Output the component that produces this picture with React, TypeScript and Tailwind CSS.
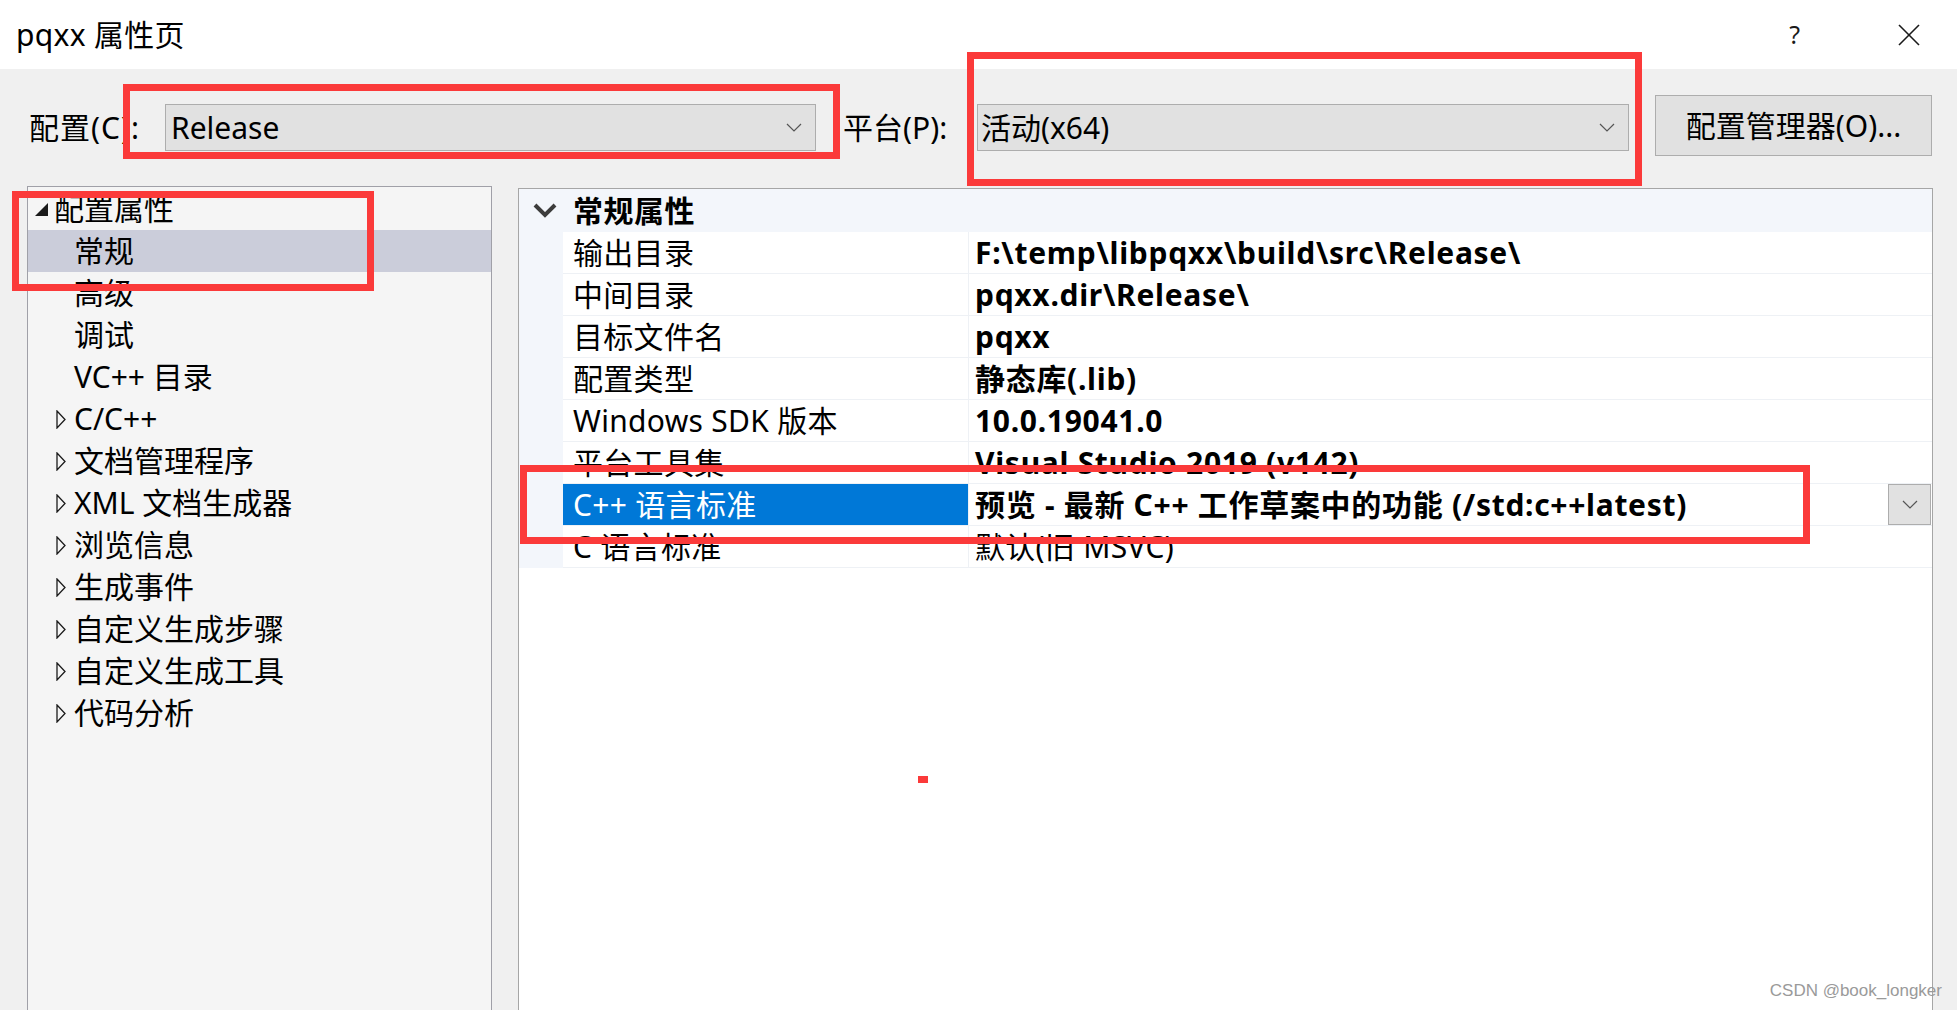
import React from "react";

const FONT = "font-['Noto_Sans','Noto_Sans_CJK_SC',sans-serif]";

function ComboChevron() {
  return (
    <svg width="16" height="9" viewBox="0 0 16 9" className="shrink-0">
      <polyline points="1,1 8,8 15,1" fill="none" stroke="#555555" strokeWidth="1.2" />
    </svg>
  );
}

function OpenTriangle() {
  return (
    <svg width="13" height="13" viewBox="0 0 13 13" className="shrink-0">
      <polygon points="13,0 13,13 0,13" fill="#1a1a1a" />
    </svg>
  );
}

function ClosedArrow() {
  return (
    <svg width="10" height="19" viewBox="0 0 10 19" className="shrink-0">
      <polygon points="1,1 9,9.5 1,18" fill="none" stroke="#1a1a1a" strokeWidth="1.3" strokeLinejoin="miter" />
    </svg>
  );
}

type TreeItem = { t: string; kind: "open" | "child" | "closed"; sel?: boolean };

const tree: TreeItem[] = [
  { t: "配置属性", kind: "open" },
  { t: "常规", kind: "child", sel: true },
  { t: "高级", kind: "child" },
  { t: "调试", kind: "child" },
  { t: "VC++ 目录", kind: "child" },
  { t: "C/C++", kind: "closed" },
  { t: "文档管理程序", kind: "closed" },
  { t: "XML 文档生成器", kind: "closed" },
  { t: "浏览信息", kind: "closed" },
  { t: "生成事件", kind: "closed" },
  { t: "自定义生成步骤", kind: "closed" },
  { t: "自定义生成工具", kind: "closed" },
  { t: "代码分析", kind: "closed" },
];

type Prop = { name: string; value: string; bold: boolean; sel?: boolean };

const props: Prop[] = [
  { name: "输出目录", value: "F:\\temp\\libpqxx\\build\\src\\Release\\", bold: true },
  { name: "中间目录", value: "pqxx.dir\\Release\\", bold: true },
  { name: "目标文件名", value: "pqxx", bold: true },
  { name: "配置类型", value: "静态库(.lib)", bold: true },
  { name: "Windows SDK 版本", value: "10.0.19041.0", bold: true },
  { name: "平台工具集", value: "Visual Studio 2019 (v142)", bold: true },
  { name: "C++ 语言标准", value: "预览 - 最新 C++ 工作草案中的功能 (/std:c++latest)", bold: true, sel: true },
  { name: "C 语言标准", value: "默认(旧 MSVC)", bold: false },
];

export default function App() {
  return (
    <div className={`relative w-[1957px] h-[1010px] overflow-hidden bg-[#f0f0f0] text-black ${FONT}`}>
      {/* Title bar */}
      <div className="flex h-[69px] items-center bg-white">
        <span className="ml-[16px] text-[30px] leading-none tracking-[0.3px]">pqxx 属性页</span>
        <span className="ml-auto text-[25px] leading-none text-[#1a1a1a]">?</span>
        <svg width="22" height="22" viewBox="0 0 22 22" className="ml-[98px] mr-[37px]">
          <line x1="1" y1="1" x2="21" y2="21" stroke="#1a1a1a" strokeWidth="1.6" />
          <line x1="21" y1="1" x2="1" y2="21" stroke="#1a1a1a" strokeWidth="1.6" />
        </svg>
      </div>

      {/* Toolbar */}
      <div className="flex h-[117px] items-center text-[30px] leading-none">
        <span className="ml-[29px] w-[136px] shrink-0 tracking-[1px]">配置(C):</span>
        <div className="flex h-[47px] w-[651px] shrink-0 items-center justify-between border border-[#adadad] bg-[#e1e1e1] pl-[5px] pr-[13px]">
          <span>Release</span>
          <ComboChevron />
        </div>
        <span className="ml-[27px] w-[134px] shrink-0">平台(P):</span>
        <div className="flex h-[47px] w-[652px] shrink-0 items-center justify-between border border-[#adadad] bg-[#e1e1e1] pl-[3px] pr-[13px]">
          <span>活动(x64)</span>
          <ComboChevron />
        </div>
        <div className="ml-[26px] mt-[-4px] flex h-[61px] w-[277px] shrink-0 items-center justify-center border border-[#adadad] bg-[#e1e1e1]">
          配置管理器(O)...
        </div>
      </div>

      {/* Panels */}
      <div className="flex h-[824px] items-start text-[30px] leading-none">
        {/* Tree */}
        <div className="ml-[27px] h-[830px] w-[465px] shrink-0 border border-[#a0a0a8] bg-[#f5f5f5] pt-[1px]">
          {tree.map((it) => (
            <div
              key={it.t}
              className={`flex h-[42px] items-center ${it.sel ? "bg-[#cbcdda]" : ""} ${
                it.kind === "open" ? "pl-[7px]" : it.kind === "closed" ? "pl-[28px]" : "pl-[46px]"
              }`}
            >
              {it.kind === "open" && <OpenTriangle />}
              {it.kind === "closed" && <ClosedArrow />}
              <span className={it.kind === "open" ? "ml-[6px]" : it.kind === "closed" ? "ml-[8px]" : ""}>{it.t}</span>
            </div>
          ))}
        </div>

        {/* Property grid */}
        <div className="ml-[26px] mt-[2px] h-[830px] w-[1415px] shrink-0 border border-[#a6a6a6] bg-white">
          <div className="flex h-[43px] items-center bg-[#f3f6fb]">
            <svg width="24" height="15" viewBox="0 0 24 15" className="ml-[14px]">
              <polyline points="2,2 12,12 22,2" fill="none" stroke="#3c3c3c" strokeWidth="4" />
            </svg>
            <span className="ml-[16px] font-bold tracking-[0.5px]">常规属性</span>
          </div>
          {props.map((p) => (
            <div key={p.name} className="flex h-[42px]">
              <div className="w-[44px] shrink-0 bg-[#f3f6fb]" />
              <div
                className={`flex w-[405px] shrink-0 items-center border-b border-[#eef1f5] pl-[10px] tracking-[0.3px] ${
                  p.sel ? "bg-[#0078d7] text-white" : ""
                }`}
              >
                {p.name}
              </div>
              <div className="flex flex-1 items-center justify-between border-b border-l border-[#eef1f5] pl-[6px]">
                <span className={p.bold ? "font-bold tracking-[0.7px]" : "tracking-[0.3px]"}>{p.value}</span>
                {p.sel && (
                  <div className="mr-[1px] flex h-[41px] w-[43px] items-center justify-center border border-[#adadad] bg-[#e1e1e1]">
                    <ComboChevron />
                  </div>
                )}
              </div>
            </div>
          ))}
        </div>
      </div>

      {/* Red annotation boxes (overlays) */}
      <div className="absolute left-[123px] top-[84px] h-[75px] w-[717px] border-[7px] border-[#fb3a3a]" />
      <div className="absolute left-[967px] top-[52px] h-[134px] w-[675px] border-[7px] border-[#fb3a3a]" />
      <div className="absolute left-[12px] top-[191px] h-[100px] w-[362px] border-[7px] border-[#fb3a3a]" />
      <div className="absolute left-[520px] top-[465px] h-[79px] w-[1290px] border-[7px] border-[#fb3a3a]" />
      <div className="absolute left-[918px] top-[776px] h-[7px] w-[10px] bg-[#fb3a3a]" />

      {/* Watermark */}
      <div className="absolute right-[15px] top-[982px] whitespace-nowrap font-['Liberation_Sans',sans-serif] text-[17px] leading-none text-[#9a9a9a]">
        CSDN @book_longker
      </div>
    </div>
  );
}
